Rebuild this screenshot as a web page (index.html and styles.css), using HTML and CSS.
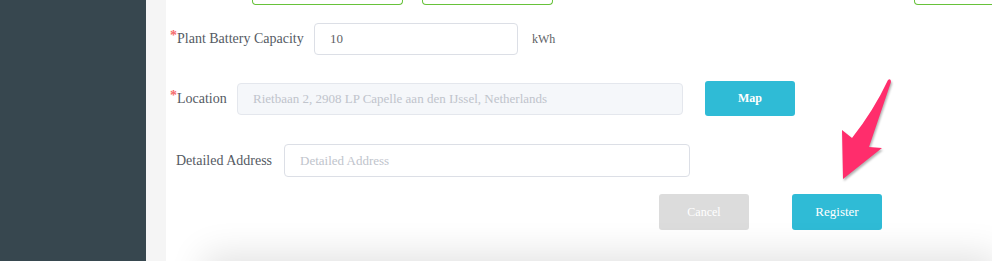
FILE: index.html
```html
<!DOCTYPE html>
<html>
<head>
<meta charset="utf-8">
<link rel="stylesheet" href="styles.css">
</head>
<body>
<div class="app">
  <aside class="sidebar"></aside>
  <div class="gutter"></div>
  <main class="content">
    <div class="top-row">
      <div class="stub stub-1"></div>
      <div class="stub stub-2"></div>
      <div class="stub stub-3"></div>
    </div>
    <div class="row row-capacity">
      <label class="label label-cap"><span class="req">*</span>Plant Battery Capacity</label>
      <input class="input input-cap" type="text" value="10">
      <span class="unit">kWh</span>
    </div>
    <div class="row row-location">
      <label class="label label-loc"><span class="req">*</span>Location</label>
      <input class="input input-loc" type="text" disabled placeholder="Rietbaan 2, 2908 LP Capelle aan den IJssel, Netherlands">
      <button class="btn btn-primary btn-map">Map</button>
    </div>
    <div class="row row-address">
      <label class="label label-addr">Detailed Address</label>
      <input class="input input-addr" type="text" placeholder="Detailed Address">
    </div>
    <div class="row row-actions">
      <button class="btn btn-cancel">Cancel</button>
      <button class="btn btn-primary btn-register">Register</button>
    </div>
    <div class="footer-card"></div>
  </main>
</div>
<svg class="arrow" width="70" height="120" viewBox="0 0 70 120">
  <path d="M58,10 Q61,8 61,12 L39,77 L52,78 L13,109 L12,60 L22,68 Q44,40 58,10 Z" fill="#ff2d6c"/>
</svg>
</body>
</html>
```
FILE: styles.css
```css
html, body {
  margin: 0;
  padding: 0;
  height: 261px;
  overflow: hidden;
  background: #ffffff;
  font-family: "Liberation Serif", "Times New Roman", serif;
}

.app {
  display: flex;
  height: 261px;
}

.sidebar {
  width: 146px;
  flex: none;
  background: #37474f;
}

.gutter {
  width: 20px;
  flex: none;
  background: #f5f5f5;
}

.content {
  flex: 1;
  background: #ffffff;
  padding-left: 4px;
  display: flex;
  flex-direction: column;
  overflow: hidden;
}

.top-row {
  display: flex;
  height: 5px;
  flex: none;
}

.stub {
  flex: none;
  height: 4px;
  border: 1px solid #67c23a;
  border-top: none;
  border-radius: 0 0 4px 4px;
}

.stub-1 { margin-left: 82px; width: 149px; }
.stub-2 { margin-left: 19px; width: 129px; }
.stub-3 { margin-left: 361px; width: 120px; }

.row {
  display: flex;
  align-items: center;
  flex: none;
}

.row-capacity { margin-top: 18px; height: 32px; }
.row-location { margin-top: 26px; height: 36px; }
.row-address { margin-top: 27px; height: 33px; }
.row-actions { margin-top: 17px; height: 36px; padding-left: 489px; }

.label {
  font-size: 14px;
  color: #555a63;
  white-space: nowrap;
  flex: none;
}

.req {
  color: #f56c6c;
  font-size: 14px;
  font-weight: bold;
  position: relative;
  top: -3px;
}

.label-cap { width: 144px; }
.label-loc { width: 67px; }
.label-addr { width: 108px; padding-left: 6px; }

.input {
  box-sizing: border-box;
  height: 32px;
  border: 1px solid #dcdfe6;
  border-radius: 4px;
  padding: 0 15px;
  font-family: "Liberation Serif", "Times New Roman", serif;
  font-size: 13px;
  color: #606266;
  background: #ffffff;
  outline: none;
  flex: none;
}

.input::placeholder {
  color: #c0c4cc;
}

.input-cap { width: 204px; }
.input-loc {
  width: 446px;
  background: #f5f7fa;
  border-color: #e4e7ed;
}
.input-addr { width: 406px; height: 33px; }

.unit {
  margin-left: 14px;
  font-size: 12px;
  color: #606266;
}

.btn {
  box-sizing: border-box;
  width: 90px;
  height: 36px;
  border: none;
  border-radius: 3px;
  color: #ffffff;
  font-family: "Liberation Serif", "Times New Roman", serif;
  font-size: 12px;
  flex: none;
  padding: 0;
}

.btn-primary { background: #2fbbd6; }
.btn-map { margin-left: 22px; font-weight: bold; height: 35px; margin-top: -1px; }
.btn-cancel { background: #dcdcdc; }
.btn-register { margin-left: 43px; font-size: 13px; }

.footer-card {
  margin-top: 31px;
  margin-left: 40px;
  height: 60px;
  flex: none;
  background: #e6e6e6;
  box-shadow: 0 0 36px 6px rgba(0, 0, 0, 0.12);
}

.arrow {
  position: absolute;
  left: 830px;
  top: 70px;
  filter: drop-shadow(1px 2px 1px rgba(0, 0, 0, 0.3));
}
```
